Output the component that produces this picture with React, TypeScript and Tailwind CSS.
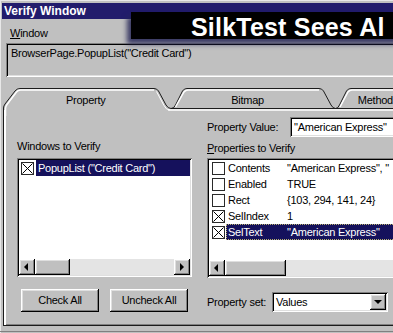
import type { ReactElement } from "react"

// classic 3d bevels
const SUNKEN =
  "shadow-[inset_1px_1px_0_#808080,inset_-1px_-1px_0_#ffffff,inset_2px_2px_0_#000000,inset_-2px_-2px_0_#dfdfdf]"
const RAISED =
  "shadow-[inset_-1px_-1px_0_#000000,inset_1px_1px_0_#ffffff,inset_-2px_-2px_0_#808080,inset_2px_2px_0_#dfdfdf]"

function CheckBox({ checked }: { checked?: boolean }): ReactElement {
  return (
    <span className="flex h-[13px] w-[13px] shrink-0 items-center justify-center border border-[#2a2a2a] bg-white">
      {checked && (
        <svg width="11" height="11" viewBox="0 0 11 11">
          <path d="M0.5 0.5L10.5 10.5M10.5 0.5L0.5 10.5" stroke="#000" strokeWidth="1" />
        </svg>
      )}
    </span>
  )
}

function Arrow({ dir }: { dir: "left" | "right" | "down" }): ReactElement {
  const d =
    dir === "left" ? "M5 0L1 4L5 8Z" : dir === "right" ? "M2 0L6 4L2 8Z" : "M0 2L8 2L4 6Z"
  return (
    <svg width="8" height="8" viewBox="0 0 8 8">
      <path d={d} fill="#000" />
    </svg>
  )
}

function ScrollBar({ thumb }: { thumb: string }): ReactElement {
  return (
    <div className="flex h-[16px] shrink-0 bg-[#e4e4e4]">
      <div className={`flex w-[16px] items-center justify-center bg-[#c0c0c0] ${RAISED}`}>
        <Arrow dir="left" />
      </div>
      <div className={`bg-[#c0c0c0] ${RAISED} ${thumb}`} />
      <div className="flex-1" />
      <div className={`flex w-[16px] items-center justify-center bg-[#c0c0c0] ${RAISED}`}>
        <Arrow dir="right" />
      </div>
    </div>
  )
}

const properties = [
  { name: "Contents", value: '"American Express", "', checked: false },
  { name: "Enabled", value: "TRUE", checked: false },
  { name: "Rect", value: "{103, 294, 141, 24}", checked: false },
  { name: "SelIndex", value: "1", checked: true },
  { name: "SelText", value: '"American Express"', checked: true, selected: true },
]

function TabOutline(): ReactElement {
  return (
    <svg className="absolute left-0 top-0 overflow-visible" width="420" height="26" viewBox="0 0 420 26" fill="none">
      {/* dark outlines */}
      <path
        d="M3.5 30L3.5 22Q3.5 20 5 18L15 5Q17 2.5 20 2.5L154 2.5Q157 2.5 158.5 5L166 19Q168 22.5 171 22.5Q174 22.5 175.5 19L182.5 5Q184 2.5 187 2.5L319 2.5Q322 2.5 323.5 5L331 19Q333 22.5 335.5 22.5Q338 22.5 339.5 19L346.5 5Q348 2.5 351 2.5L420 2.5"
        stroke="#1c1c1c"
      />
      <path d="M171 22.5L420 22.5" stroke="#1c1c1c" />
      {/* highlights */}
      <path d="M5.5 30L5.5 22.5Q5.5 20.5 7 18.5L16.5 6Q18 4 20.5 4L154 4" stroke="#ffffff" strokeWidth="1.5" />
      <path d="M156.5 5.5L164 19.5Q166 24 170 24" stroke="#ffffff" />
      <path d="M175.5 21L184 6Q185.5 4 188 4L319 4" stroke="#ffffff" strokeWidth="1.5" />
      <path d="M340 21L348 6Q349.5 4 352 4L420 4" stroke="#ffffff" strokeWidth="1.5" />
      <path d="M168 24L420 24" stroke="#ffffff" strokeWidth="1.5" />
    </svg>
  )
}

export default function App(): ReactElement {
  return (
    <div className="relative h-[333px] w-[393px] overflow-hidden bg-[#c0c0c0] font-['Liberation_Sans',Arial,sans-serif] text-[11px] tracking-[-0.25px] text-black shadow-[inset_1px_1px_0_#e8e8e8]">
      <div className="h-[3px]" />

      {/* title bar */}
      <div className="ml-[2px] flex h-[16px] items-center bg-[#221c6c] pl-[2px] text-[12px] font-bold tracking-normal text-white">
        Verify Window
      </div>

      {/* banner over the dialog */}
      <div className="absolute left-[131px] top-[12px] h-[27px] w-[280px] bg-black pl-[60px] text-[25px] font-bold leading-[30px] tracking-[0.2px] whitespace-nowrap text-white shadow-[-4px_5px_5px_rgba(35,35,85,0.85)]">
        SilkTest Sees Al
      </div>

      <div className="pl-[10px] pt-[8px] leading-[13px]">
        <span className="underline">W</span>indow
      </div>
      <div className={`ml-[6px] mt-[3px] h-[34px] w-[420px] px-[5px] pt-[4px] leading-[13px] ${SUNKEN}`}>
        BrowserPage.PopupList("Credit Card")
      </div>

      {/* tabs */}
      <div className="relative mt-[9px] h-[24px]">
        <TabOutline />
        <div className="relative flex pt-[8px] leading-[13px] whitespace-nowrap">
          <span className="w-[171px] pl-[4px] text-center">Property</span>
          <span className="w-[164px] text-center">Bitmap</span>
          <span className="pl-[30px]">Method</span>
        </div>
      </div>

      {/* tab page */}
      <div className="ml-[3px] flex h-[216px] w-[440px] border-b border-l border-[#1c1c1c] shadow-[inset_2px_0_0_#ffffff,inset_0_-1px_0_#808080]">
        {/* left column */}
        <div className="ml-[13px] flex w-[175px] flex-col pt-[30px]">
          <div className="leading-[13px]">Windows to Verify</div>
          <div className={`mt-[5px] flex h-[119px] flex-col bg-white p-[2px] ${SUNKEN}`}>
            <div className="flex-1">
              <div className="flex h-[16px] items-center pl-[2px]">
                <CheckBox checked />
                <div className="ml-[2px] flex h-full flex-1 items-center bg-[#15115c] pl-[2px] text-white">
                  PopupList ("Credit Card")
                </div>
              </div>
            </div>
            <ScrollBar thumb="w-[35px]" />
          </div>
          <div className="mt-[12px] flex gap-[11px] pl-[4px]">
            <button className={`h-[23px] w-[78px] bg-[#c0c0c0] ${RAISED}`}>Check All</button>
            <button className={`h-[23px] w-[78px] bg-[#c0c0c0] ${RAISED}`}>Uncheck All</button>
          </div>
        </div>

        {/* right column */}
        <div className="ml-[15px] flex w-[230px] flex-col pt-[7px]">
          <div className="flex h-[20px] items-center">
            <span className="w-[83px]">Property Value:</span>
            <div className={`flex h-[20px] flex-1 items-center bg-white pl-[4px] whitespace-nowrap ${SUNKEN}`}>
              "American Express"
            </div>
          </div>
          <div className="mt-[5px] leading-[13px]">
            <span className="underline">P</span>roperties to Verify
          </div>
          <div className={`mt-[3px] flex h-[120px] flex-col bg-white p-[2px] ${SUNKEN}`}>
            <div className="flex-1 overflow-hidden">
              {properties.map((p) => (
                <div key={p.name} className="flex h-[16px] items-center pl-[3px] whitespace-nowrap">
                  <CheckBox checked={p.checked} />
                  <div
                    className={`ml-[1px] flex h-full flex-1 items-center ${
                      p.selected
                        ? "bg-[#15115c] text-white outline outline-1 -outline-offset-1 outline-dotted outline-[#b8b070]"
                        : ""
                    }`}
                  >
                    <span className="w-[61px] pl-[2px]">{p.name}</span>
                    <span>{p.value}</span>
                  </div>
                </div>
              ))}
            </div>
            <ScrollBar thumb="w-[61px]" />
          </div>
          <div className="mt-[14px] flex h-[20px] items-center">
            <span className="w-[65px]">Property set:</span>
            <div className={`flex h-[20px] w-[116px] items-center bg-white p-[2px] ${SUNKEN}`}>
              <span className="flex-1 pl-[2px]">Values</span>
              <div className={`flex h-[16px] w-[16px] items-center justify-center bg-[#c0c0c0] ${RAISED}`}>
                <Arrow dir="down" />
              </div>
            </div>
          </div>
        </div>
      </div>

      <div className="mt-[5px] h-[1px] bg-[#808080]" />
    </div>
  )
}
